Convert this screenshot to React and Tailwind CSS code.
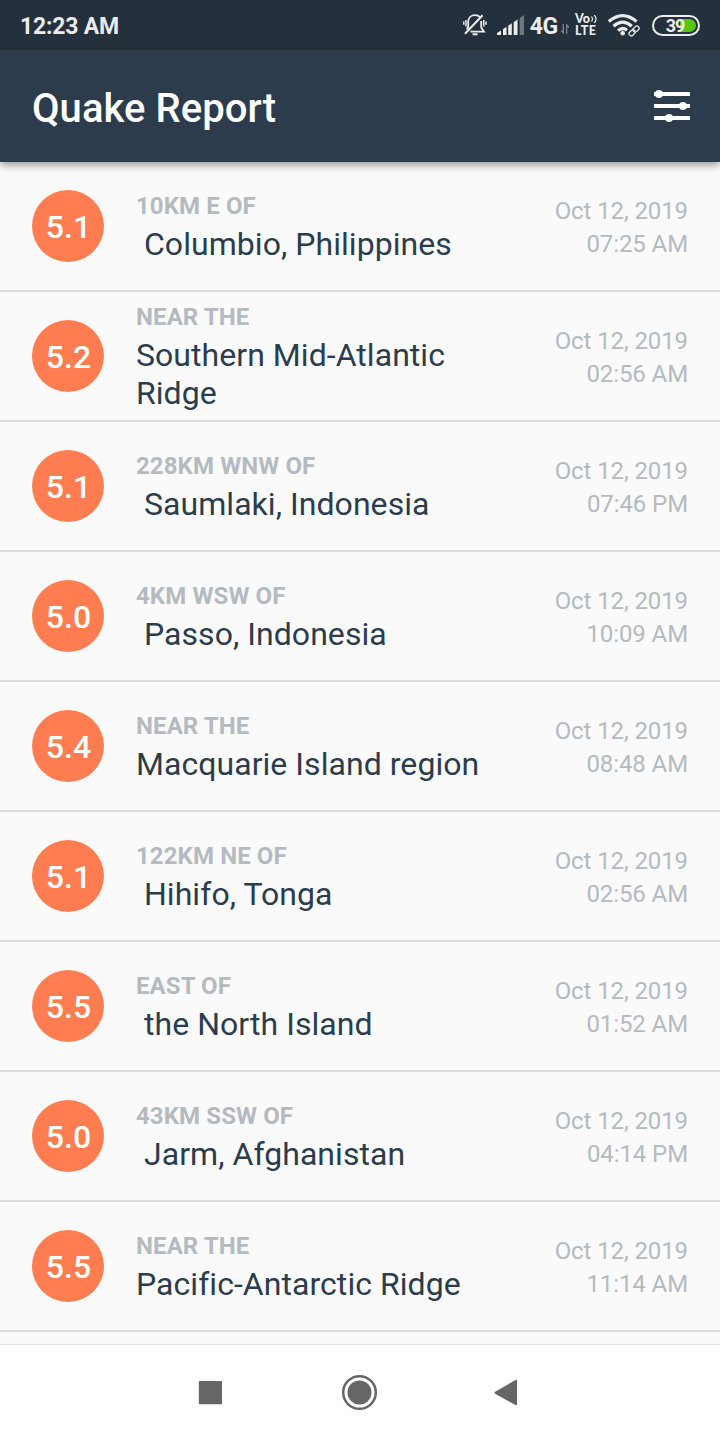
const quakes = [
  ["5.1", "10KM E OF", "\u00a0Columbio, Philippines", "07:25 AM"],
  ["5.2", "NEAR THE", "Southern Mid-Atlantic Ridge", "02:56 AM"],
  ["5.1", "228KM WNW OF", "\u00a0Saumlaki, Indonesia", "07:46 PM"],
  ["5.0", "4KM WSW OF", "\u00a0Passo, Indonesia", "10:09 AM"],
  ["5.4", "NEAR THE", "Macquarie Island region", "08:48 AM"],
  ["5.1", "122KM NE OF", "\u00a0Hihifo, Tonga", "02:56 AM"],
  ["5.5", "EAST OF", "\u00a0the North Island", "01:52 AM"],
  ["5.0", "43KM SSW OF", "\u00a0Jarm, Afghanistan", "04:14 PM"],
  ["5.5", "NEAR THE", "Pacific-Antarctic Ridge", "11:14 AM"],
];

function MutedBell() {
  return (
    <svg className="ml-auto h-6 w-6 shrink-0" viewBox="0 0 24 24" fill="none" stroke="#ececec" strokeWidth="1.8">
      <path d="M5.2 15V9C5.2 4.8 8 2.2 12 2.2c2 0 3.9.6 5 2M18.2 8v6.5l2.8 4.2H7.5M5.2 14l-1.4 2.5" />
      <path d="M2 20.8 19.6 2.2" strokeWidth="2" />
      <path d="M9.6 21.3h5" strokeWidth="2" />
      <path d="M3 7v6.5M.8 8.5v3.2M20.8 7v6.5M23 8.5v3.2" strokeWidth="1.5" />
    </svg>
  );
}

function Signal() {
  return (
    <svg className="ml-2.5 h-5 w-7 shrink-0" viewBox="0 0 28 20" fill="#ececec">
      <path d="M0 20v-2l4-2.5V20zM6 20v-6l3.5-2V20zM11.2 20v-9.3l3.6-2.4V20zM16.7 20V7.2l3.8-2.7V20z" />
      <path d="M22.7 20V3L27 0v20z" fill="#6d7780" />
    </svg>
  );
}

function Wifi() {
  return (
    <svg className="ml-2.5 h-6 w-8 shrink-0" viewBox="0 0 32 24" fill="none" stroke="#ececec">
      <path d="M.8 8.5Q14.7-3.4 28.5 8.5M5.5 13.2Q14.7 5 23.8 13.2M10 17.6q4.7-4 9-.4" strokeWidth="3.2" />
      <circle cx="14.7" cy="20.3" r="2.3" fill="#ececec" stroke="none" />
      <g transform="translate(26 18) rotate(-44)" strokeWidth="1.3">
        <rect x="-6" y="-2.2" width="6.7" height="4.4" rx="2.2" />
        <rect x="-.5" y="-2.2" width="6.7" height="4.4" rx="2.2" />
      </g>
    </svg>
  );
}

function StatusBar() {
  return (
    <div className="flex h-[50px] shrink-0 items-center bg-[#24303c] pr-5 pl-5 text-[#ececec]">
      <span className="pt-[3px] text-[23px] leading-[26px] font-bold tracking-[-0.2px]">12:23 AM</span>
      <MutedBell />
      <Signal />
      <span className="ml-[5px] pt-[3px] text-[23px] leading-[26px] font-bold tracking-[-0.3px]">4G</span>
      <svg className="mt-2 ml-[3px] h-2.5 w-2 shrink-0" viewBox="0 0 8 10" fill="none" stroke="#7c858c" strokeWidth="1.3">
        <path d="M2.3 0v9L0 6.5M5.7 10V1L8 3.5" />
      </svg>
      <span className="ml-1.5 flex w-[23px] flex-col font-['Lato',sans-serif] text-[12.5px] leading-[12px] font-black">
        <span className="flex h-3 items-center">
          Vo
          <svg className="ml-px h-2 w-1.5 shrink-0" viewBox="0 0 6 8" fill="none" stroke="#ececec" strokeWidth="1.2">
            <path d="M.5 1.5Q2.5 4 .5 6.5M3.3 0q3.4 4 0 8" />
          </svg>
        </span>
        <span className="h-3 tracking-[0.4px]">LTE</span>
      </span>
      <Wifi />
      <span className="ml-3 flex h-[21px] w-12 rounded-full border-2 border-[#ececec] p-0.5">
        <span className="flex h-full w-full items-center justify-center rounded-full bg-linear-to-r from-transparent from-60% to-[#58c613] to-60% pt-px pr-0.5 text-[18px] leading-[18px] font-bold tracking-[-1px]">39</span>
      </span>
    </div>
  );
}

export default function App() {
  return (
    <div className="flex h-[1440px] w-[720px] flex-col overflow-hidden bg-[#fafafa] font-['Roboto',sans-serif]">
      <StatusBar />
      <header className="relative flex h-28 shrink-0 items-center justify-between bg-[#2c3c4d] pr-[30px] pl-8 shadow-[0_3px_8px_rgba(0,0,0,0.4)]">
        <h1 className="pt-1.5 text-[40px] leading-[48px] font-medium tracking-[0.06px] text-white">Quake Report</h1>
        <svg className="h-9 w-9" viewBox="0 0 36 36" fill="white">
          <path d="M0 4h36v4H0zM0 16h36v4H0zM0 28h36v4H0z" />
          <circle cx="5" cy="6" r="4" />
          <circle cx="29" cy="18" r="4" />
          <circle cx="15" cy="30" r="4" />
        </svg>
      </header>
      <main className="min-h-0 flex-1">
        {quakes.map(([magnitude, offset, place, time], i) => (
          <div key={i} className="flex h-[130px] items-center border-b-2 border-[#dcdcdc] px-8">
            <div className="flex h-18 w-18 shrink-0 items-center justify-center rounded-full bg-[#ff7d50] pt-px pl-px text-[32px] leading-[38px] font-medium text-white">
              {magnitude}
            </div>
            <div className="ml-8 flex w-[362px] flex-col gap-[5px] pt-[3px]">
              <div className="text-[24px] leading-[28px] font-bold tracking-[0.1px] text-[#b4bac0]">{offset}</div>
              <div className="text-[32px] leading-[38px] tracking-[0.05px] text-[#2b3d4d]">{place}</div>
            </div>
            <div className="ml-auto flex flex-col gap-[5px] pt-0.5 text-right text-[24px] leading-[28px] tracking-[-0.1px] whitespace-nowrap text-[#b4bac0]">
              <span>Oct 12, 2019</span>
              <span>{time}</span>
            </div>
          </div>
        ))}
      </main>
      <nav className="flex h-24 shrink-0 items-center border-t border-[#e1e1e1] bg-white pl-[198px]">
        <svg className="h-10 w-[322px]" viewBox="0 0 322 40" fill="#666">
          <rect x="0.8" y="8" width="23.2" height="23.2" rx="1" />
          <circle cx="161.5" cy="19.5" r="12" />
          <circle cx="161.5" cy="19.5" r="16.3" fill="none" stroke="#666" strokeWidth="2.5" />
          <path d="M297.5 18.5 317.5 7q1.5-.7 1.5 1v23q0 1.7-1.5 1L297.5 21q-2-1.2 0-2.5z" />
        </svg>
      </nav>
    </div>
  );
}
